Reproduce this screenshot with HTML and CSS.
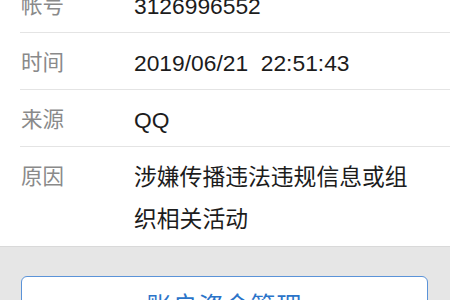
FILE: index.html
```html
<!DOCTYPE html>
<html lang="zh-CN">
<head>
<meta charset="utf-8">
<link rel="stylesheet" href="styles.css">
</head>
<body>
<div class="page">
  <div class="list">
    <div class="row">
      <div class="label">帐号</div>
      <div class="value">3126996552</div>
    </div>
    <div class="row">
      <div class="label">时间</div>
      <div class="value">2019/06/21&nbsp;&nbsp;22:51:43</div>
    </div>
    <div class="row">
      <div class="label">来源</div>
      <div class="value">QQ</div>
    </div>
    <div class="row last">
      <div class="label">原因</div>
      <div class="value">涉嫌传播违法违规信息或组织相关活动</div>
    </div>
  </div>
  <div class="actions">
    <button class="btn">账户资金管理</button>
  </div>
</div>
</body>
</html>
```
FILE: styles.css
```css
html, body {
  margin: 0;
  padding: 0;
  background: #e6e6e6;
  overflow: hidden;
}
body {
  font-family: "Liberation Sans", "Noto Sans CJK SC", sans-serif;
  width: 450px;
  height: 300px;
}
.page {
  display: flex;
  flex-direction: column;
}
.list {
  background: #ffffff;
  margin-top: -24px;
  border-bottom: 1px solid #d9d9d9;
}
.row {
  display: flex;
  margin-left: 20px;
  padding: 9px 36px 5px 1px;
  border-bottom: 1px solid #e4e4e4;
  line-height: 42px;
}
.row.last {
  border-bottom: none;
  padding-bottom: 6px;
}
.label {
  width: 113px;
  flex: none;
  font-size: 21.5px;
  color: #8a8a8a;
}
.value {
  flex: 1;
  font-size: 22.8px;
  color: #1c1c1c;
}
.actions {
  padding: 29px 22px 0 21px;
}
.btn {
  display: block;
  width: 100%;
  height: 52px;
  background: #ffffff;
  border: 1.5px solid #5b93d8;
  border-radius: 6px;
  font-family: "Liberation Sans", "Noto Sans CJK SC", sans-serif;
  font-size: 25px;
  letter-spacing: 1px;
  color: #2b74c9;
  padding: 8px 0 0 0;
  line-height: 40px;
}
```
